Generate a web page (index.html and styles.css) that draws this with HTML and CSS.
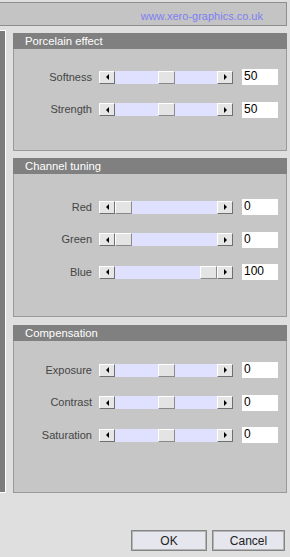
FILE: index.html
```html
<!DOCTYPE html>
<html>
<head>
<meta charset="utf-8">
<link rel="stylesheet" href="styles.css">
</head>
<body>
<div class="topbar"><span class="url">www.xero-graphics.co.uk</span></div>
<div class="main">
  <div class="sidebar"></div>
  <div class="panels">
    <section class="panel panel-porcelain">
      <div class="panel-head">Porcelain effect</div>
      <div class="panel-body body-porcelain">
        <div class="row"><span class="label">Softness</span><div class="slider"><span class="arrow"><i class="tri-left"></i></span><span class="track"><span class="thumb" style="--p:0.5"></span></span><span class="arrow"><i class="tri-right"></i></span></div><span class="value">50</span></div>
        <div class="row"><span class="label">Strength</span><div class="slider"><span class="arrow"><i class="tri-left"></i></span><span class="track"><span class="thumb" style="--p:0.5"></span></span><span class="arrow"><i class="tri-right"></i></span></div><span class="value">50</span></div>
      </div>
    </section>
    <section class="panel panel-channel">
      <div class="panel-head">Channel tuning</div>
      <div class="panel-body body-channel">
        <div class="row"><span class="label">Red</span><div class="slider"><span class="arrow"><i class="tri-left"></i></span><span class="track"><span class="thumb" style="--p:0"></span></span><span class="arrow"><i class="tri-right"></i></span></div><span class="value">0</span></div>
        <div class="row"><span class="label">Green</span><div class="slider"><span class="arrow"><i class="tri-left"></i></span><span class="track"><span class="thumb" style="--p:0"></span></span><span class="arrow"><i class="tri-right"></i></span></div><span class="value">0</span></div>
        <div class="row"><span class="label">Blue</span><div class="slider"><span class="arrow"><i class="tri-left"></i></span><span class="track"><span class="thumb" style="--p:1"></span></span><span class="arrow"><i class="tri-right"></i></span></div><span class="value">100</span></div>
      </div>
    </section>
    <section class="panel panel-comp">
      <div class="panel-head">Compensation</div>
      <div class="panel-body body-comp">
        <div class="row"><span class="label">Exposure</span><div class="slider"><span class="arrow"><i class="tri-left"></i></span><span class="track"><span class="thumb" style="--p:0.5"></span></span><span class="arrow"><i class="tri-right"></i></span></div><span class="value">0</span></div>
        <div class="row"><span class="label">Contrast</span><div class="slider"><span class="arrow"><i class="tri-left"></i></span><span class="track"><span class="thumb" style="--p:0.5"></span></span><span class="arrow"><i class="tri-right"></i></span></div><span class="value">0</span></div>
        <div class="row"><span class="label">Saturation</span><div class="slider"><span class="arrow"><i class="tri-left"></i></span><span class="track"><span class="thumb" style="--p:0.5"></span></span><span class="arrow"><i class="tri-right"></i></span></div><span class="value">0</span></div>
      </div>
    </section>
  </div>
</div>
<div class="footer">
  <button class="btn btn-ok">OK</button>
  <button class="btn btn-cancel">Cancel</button>
</div>
</body>
</html>
```
FILE: styles.css
```css
* { box-sizing: border-box; }
html, body { margin: 0; padding: 0; }
body {
  width: 290px;
  height: 557px;
  overflow: hidden;
  background: #dfdfdf;
  font-family: "Liberation Sans", Arial, sans-serif;
  font-size: 11px;
  color: #333;
}
.topbar {
  margin-top: 2px;
  width: 287px;
  height: 24px;
  background: #c4c4c4;
  border-top: 1px solid #8e8e8e;
  border-bottom: 1px solid #8e8e8e;
  border-right: 1px solid #8e8e8e;
  display: flex;
  align-items: center;
  justify-content: flex-end;
  padding-right: 23px;
  padding-top: 4px;
}
.url { color: #7f7ff2; font-size: 11px; }
.main { display: flex; margin-top: 4px; }
.sidebar {
  width: 6px;
  height: 463px;
  background: #7c7c7c;
  border: 1px solid #fff;
  border-left: none;
}
.panels {
  margin-left: 7px;
  margin-top: 3px;
  width: 274px;
  display: flex;
  flex-direction: column;
}
.panel {
  background: #c6c6c6;
  border: 1px solid #9a9a9a;
  border-top: none;
}
.panel-porcelain { height: 118px; }
.panel-channel { height: 159px; margin-top: 7px; }
.panel-comp { height: 168px; margin-top: 8px; }
.panel-head {
  height: 16px;
  margin: 0 -1px;
  background: #808080;
  color: #fff;
  font-size: 11.3px;
  line-height: 16px;
  padding-left: 12px;
}
.panel-body { display: flex; flex-direction: column; gap: 16.5px; }
.body-porcelain { padding-top: 20px; }
.body-channel { padding-top: 25px; }
.body-comp { padding-top: 21px; }
.row { display: flex; align-items: center; height: 16px; }
.label {
  width: 78px;
  text-align: right;
  margin-right: 7px;
  color: #454545;
  font-size: 11px;
  line-height: 13px;
}
.slider {
  width: 134px;
  height: 13px;
  display: flex;
  margin-right: 9px;
}
.arrow {
  width: 16px;
  height: 13px;
  background: #e6e6e6;
  border: 1px solid;
  border-color: #fff #707070 #707070 #fff;
  display: flex;
  align-items: center;
  justify-content: center;
}
.tri-left, .tri-right {
  width: 0;
  height: 0;
  border-top: 3px solid transparent;
  border-bottom: 3px solid transparent;
}
.tri-left { border-right: 3px solid #000; }
.tri-right { border-left: 3px solid #000; }
.track {
  flex: 1;
  height: 13px;
  background: #e0e0ff;
  display: flex;
}
.thumb {
  width: 17px;
  height: 13px;
  background: #e4e4e4;
  border: 1px solid;
  border-color: #fff #8a8a8a #8a8a8a #fff;
  margin-left: calc(var(--p) * (100% - 17px));
}
.value {
  width: 36px;
  height: 16px;
  background: #fff;
  color: #000;
  font-size: 12px;
  line-height: 15px;
  padding-left: 2px;
}
.footer {
  display: flex;
  justify-content: flex-end;
  gap: 5px;
  margin-top: 37px;
  padding-right: 5px;
}
.btn {
  height: 21px;
  background: #e6e6ee;
  border: 1px solid #858585;
  box-shadow: inset 0 0 0 1px #b4b4b4;
  font-family: "Liberation Sans", Arial, sans-serif;
  font-size: 12px;
  color: #222;
  padding: 0;
  margin: 0;
}
.btn-ok { width: 76px; }
.btn-cancel { width: 73px; }
```
